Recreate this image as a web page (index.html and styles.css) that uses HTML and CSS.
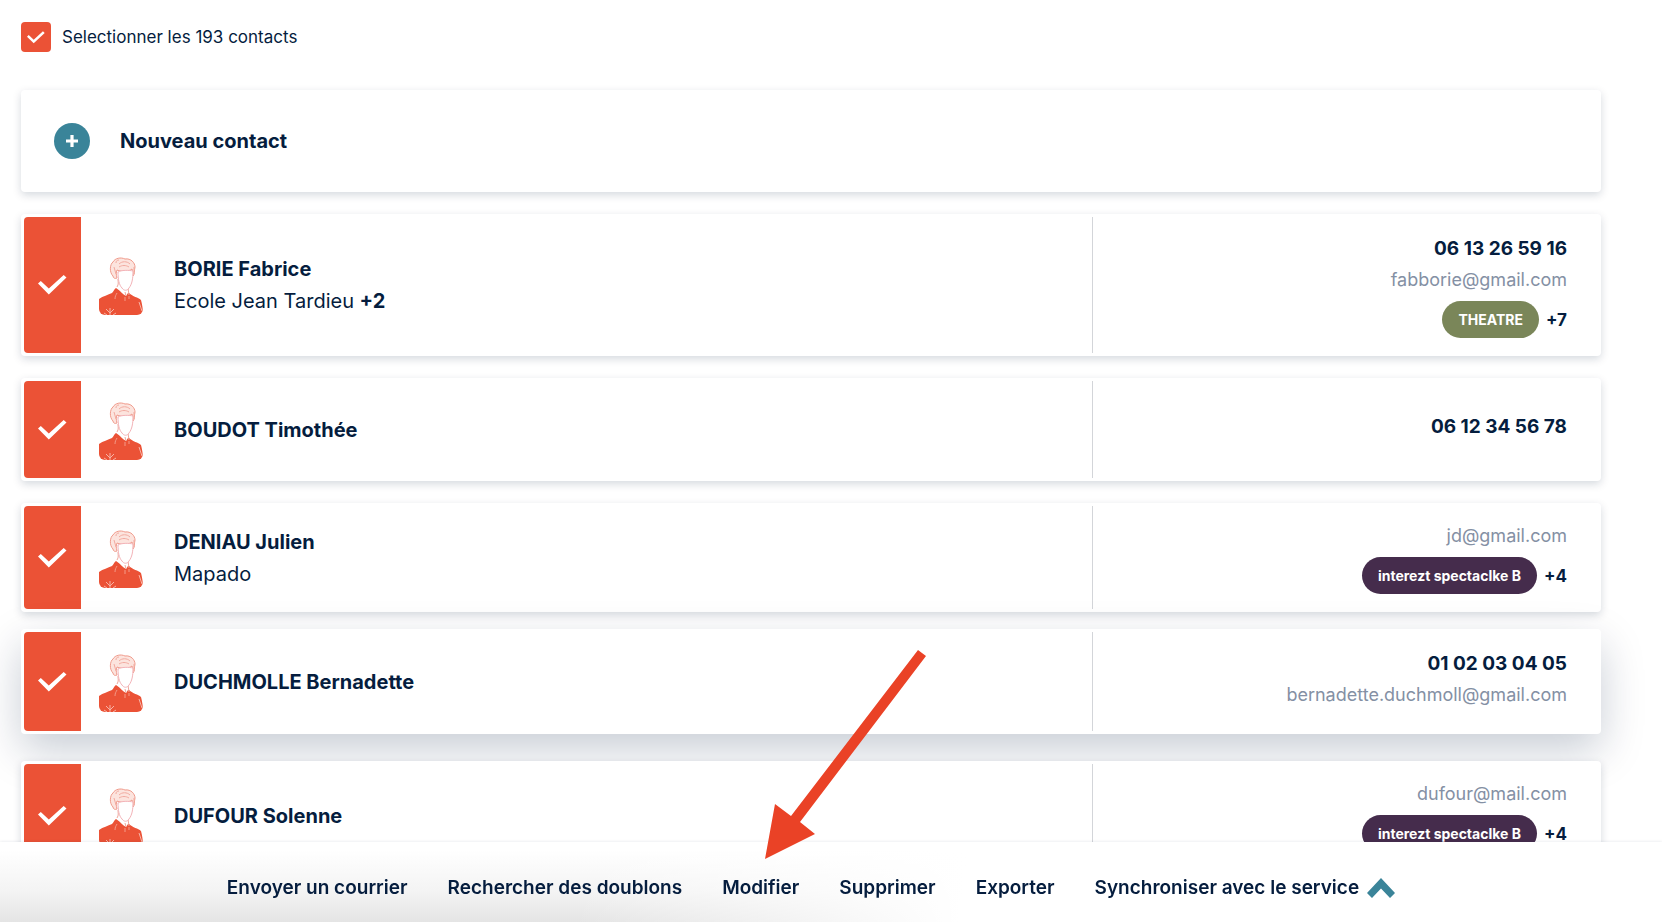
FILE: index.html
```
<!DOCTYPE html>
<html lang="fr">
  <head>
    <meta charset="UTF-8" />
    <meta name="viewport" content="width=device-width, initial-scale=1.0" />
    <title>Contacts</title>
    <link rel="stylesheet" href="styles.css">
  </head>
  <body>
    <!-- Shared icons -->
    <svg class="sprite" aria-hidden="true">
      <symbol id="check" viewBox="0 0 29 20">
        <path d="M0 8.6 2.8 6 10.8 13.6 25.7 0l2.8 2.6L10.8 19.4z" fill="#fff" />
      </symbol>
      <symbol id="avatar" viewBox="0 0 44 60">
        <path d="M0 44c4-3 9-4 13-6 2-2 2-4 4-5l7 5 6 0c4 4 9 4 12 7 1 4 2 8 2 15H0z" fill="#eb5236" />
        <path d="M18 32c2-2 0-5 0-9h14c0 6-1 10-3 15l-2 3c-4-2-6-5-9-9z" fill="#fff" />
        <path d="M18 32c2-3 1-5 1-8M29 33l1 7M26 37l1 4" fill="none" stroke="#f0a79b" />
        <path d="M14 21c-4-4-3-12 0-14 2-4 8-5 12-3 6-1 10 4 10 8-1 4 0 7-2 9-1-3 0-5-1-7-4 3-10 3-15 1-1 3-1 4 0 8-2 1-4 0-4-2z" fill="#fce4de" stroke="#ef9a8b" />
        <path d="M19 17c3-2 11-2 15-1 0 8-1 13-4 17-2 3-5 3-7 0-3-3-4-9-4-16z" fill="#fff" stroke="#f3b3b8" />
        <path d="M20 9c3-3 8-3 11 0M20 12c3-2 7-2 10 0M17 8c0-2 1-3 3-3M15 12l2 7M35 12v7" fill="none" stroke="#f1aba0" />
        <path d="M16 44c0-3 1-4 2-6M26 42v4M30 41v3" fill="none" stroke="#f49a87" />
        <path d="M11 60v-7M11 58l-4-4M11 58l4-4M8 60l-3-2M14 60l3-2M40 47l3 9" fill="none" stroke="#f7b3a5" />
      </symbol>
    </svg>

    <main class="page">
      <label class="select-all">
        <span class="tick tick-small">
          <input type="checkbox" checked />
          <svg><use href="#check" /></svg>
        </span>
        Selectionner les 193 contacts
      </label>

      <button type="button" class="card new-contact">
        <svg class="plus" viewBox="0 0 36 36">
          <circle cx="18" cy="18" r="18" fill="#3a8499" />
          <path d="M18 12v12M12 18h12" stroke="#fff" stroke-width="3.2" />
        </svg>
        Nouveau contact
      </button>

      <article class="card contact">
        <label class="tick">
          <input type="checkbox" aria-label="BORIE Fabrice" checked />
          <svg><use href="#check" /></svg>
        </label>
        <svg class="avatar"><use href="#avatar" /></svg>
        <div class="identity">
          <strong>BORIE Fabrice</strong>
          <span>Ecole Jean Tardieu <b>+2</b></span>
        </div>
        <div class="details">
          <div class="lines">
            <div class="phone">06 13 26 59 16</div>
            <div class="email">fabborie@gmail.com</div>
          </div>
          <div class="tags"><span class="tag green">THEATRE</span> +7</div>
        </div>
      </article>

      <article class="card contact">
        <label class="tick">
          <input type="checkbox" aria-label="BOUDOT Timothée" checked />
          <svg><use href="#check" /></svg>
        </label>
        <svg class="avatar"><use href="#avatar" /></svg>
        <div class="identity">
          <strong>BOUDOT Timothée</strong>
        </div>
        <div class="details">
          <div class="lines">
            <div class="phone">06 12 34 56 78</div>
          </div>
        </div>
      </article>

      <article class="card contact">
        <label class="tick">
          <input type="checkbox" aria-label="DENIAU Julien" checked />
          <svg><use href="#check" /></svg>
        </label>
        <svg class="avatar"><use href="#avatar" /></svg>
        <div class="identity">
          <strong>DENIAU Julien</strong>
          <span>Mapado</span>
        </div>
        <div class="details">
          <div class="lines">
            <div class="email">jd@gmail.com</div>
          </div>
          <div class="tags"><span class="tag purple">interezt spectaclke B</span> +4</div>
        </div>
      </article>

      <article class="card contact raised">
        <label class="tick">
          <input type="checkbox" aria-label="DUCHMOLLE Bernadette" checked />
          <svg><use href="#check" /></svg>
        </label>
        <svg class="avatar"><use href="#avatar" /></svg>
        <div class="identity">
          <strong>DUCHMOLLE Bernadette</strong>
        </div>
        <div class="details">
          <div class="lines">
            <div class="phone">01 02 03 04 05</div>
            <div class="email">bernadette.duchmoll@gmail.com</div>
          </div>
        </div>
      </article>

      <article class="card contact">
        <label class="tick">
          <input type="checkbox" aria-label="DUFOUR Solenne" checked />
          <svg><use href="#check" /></svg>
        </label>
        <svg class="avatar"><use href="#avatar" /></svg>
        <div class="identity">
          <strong>DUFOUR Solenne</strong>
        </div>
        <div class="details">
          <div class="lines">
            <div class="email">dufour@mail.com</div>
          </div>
          <div class="tags"><span class="tag purple">interezt spectaclke B</span> +4</div>
        </div>
      </article>
    </main>

    <footer class="actions">
      <button type="button">Envoyer un courrier</button>
      <button type="button">Rechercher des doublons</button>
      <button type="button">Modifier</button>
      <button type="button">Supprimer</button>
      <button type="button">Exporter</button>
      <button type="button">
        Synchroniser avec le service
        <svg class="chevron" viewBox="0 0 28 20">
          <path d="M14 0 28 15 23 20 14 10.5 5 20 0 15z" fill="#3a8499" />
        </svg>
      </button>
    </footer>

    <!-- Arrow pointing at "Modifier" -->
    <svg class="arrow" viewBox="0 0 161 209" aria-hidden="true">
      <path d="M153 0l8 6L35 172l15 12L0 209l10-55 16 12z" fill="#ea4226" />
    </svg>
  </body>
</html>
```
FILE: styles.css
```
* {
  box-sizing: border-box;
}
body {
  margin: 0;
  font-family: "Inter", sans-serif;
  font-size: 20px;
  color: #051d3e;
  background: #fff;
}
button {
  font: inherit;
  color: inherit;
  border: none;
  background: none;
  cursor: pointer;
}
.sprite {
  display: none;
}
.page {
  display: flex;
  flex-direction: column;
  gap: 22px;
  padding: 22px 61px 0 21px;
}
.select-all {
  display: flex;
  align-items: center;
  gap: 11px;
  margin-bottom: 16px;
  font-size: 17px;
}

/* Cards */
.card {
  border-radius: 4px;
  background: #fff;
  box-shadow: 0 3px 8px rgba(5, 29, 62, 0.17);
}
.new-contact {
  display: flex;
  align-items: center;
  gap: 30px;
  padding: 33px;
  font-weight: 700;
}
.plus {
  width: 36px;
  height: 36px;
}
.contact {
  display: flex;
  min-height: 103px;
  padding: 3px;
}
.raised {
  margin: -5px 0 5px;
  box-shadow: 0 16px 44px rgba(5, 29, 62, 0.22);
}

/* Checkboxes */
.tick {
  display: grid;
  width: 57px;
  place-items: center;
  cursor: pointer;
}
.tick input {
  grid-area: 1 / 1;
  width: 100%;
  height: 100%;
  margin: 0;
  appearance: none;
  border-radius: 4px 0 0 4px;
  background: #eb5236;
}
.tick svg {
  grid-area: 1 / 1;
  width: 29px;
  height: 20px;
  pointer-events: none;
}
.tick-small {
  width: 30px;
  height: 30px;
}
.tick-small input {
  border-radius: 4px;
}
.tick-small svg {
  width: 18px;
  height: 13px;
}

.avatar {
  align-self: center;
  width: 44px;
  height: 60px;
  margin: 0 31px 0 18px;
  border-radius: 6px;
}
.identity {
  display: flex;
  flex: 1;
  flex-direction: column;
  justify-content: center;
  line-height: 32px;
}
.identity strong,
.identity b {
  font-weight: 700;
}
.details {
  display: flex;
  flex-direction: column;
  justify-content: center;
  width: 506px;
  padding: 15px 31px 15px 0;
  border-left: 1px solid #d3d5d9;
  text-align: right;
}
.lines {
  margin-bottom: 6px;
}
.phone {
  font-weight: 700;
  font-size: 19px;
  line-height: 33px;
}
.email {
  font-size: 18px;
  line-height: 30px;
  color: #8490a4;
}
.tags {
  display: flex;
  align-items: center;
  justify-content: flex-end;
  gap: 7px;
  font-weight: 700;
  font-size: 17px;
}
.tag {
  padding: 0 16px;
  border-radius: 19px;
  font-size: 14px;
  line-height: 37px;
  color: #fff;
}
.green {
  background: #7a8659;
}
.purple {
  background: #452c4c;
}

/* Bottom action bar */
.actions {
  position: fixed;
  right: 0;
  bottom: 0;
  left: 0;
  display: flex;
  align-items: center;
  justify-content: center;
  gap: 40px;
  height: 80px;
  padding: 11px 61px 0 21px;
  background: linear-gradient(100deg, rgba(255, 255, 255, 0) 35%, #fff 58%), linear-gradient(#fff 10%, #f4f4f4 60%, #e4e4e4);
  box-shadow: 0 0 3px rgba(5, 29, 62, 0.12);
}
.actions button {
  display: flex;
  align-items: center;
  gap: 8px;
  padding: 0;
  font-weight: 600;
  font-size: 19px;
  white-space: nowrap;
}
.chevron {
  width: 28px;
  height: 20px;
}
.arrow {
  position: fixed;
  bottom: 63px;
  left: 46%;
  width: 161px;
  height: 209px;
  pointer-events: none;
}
```
